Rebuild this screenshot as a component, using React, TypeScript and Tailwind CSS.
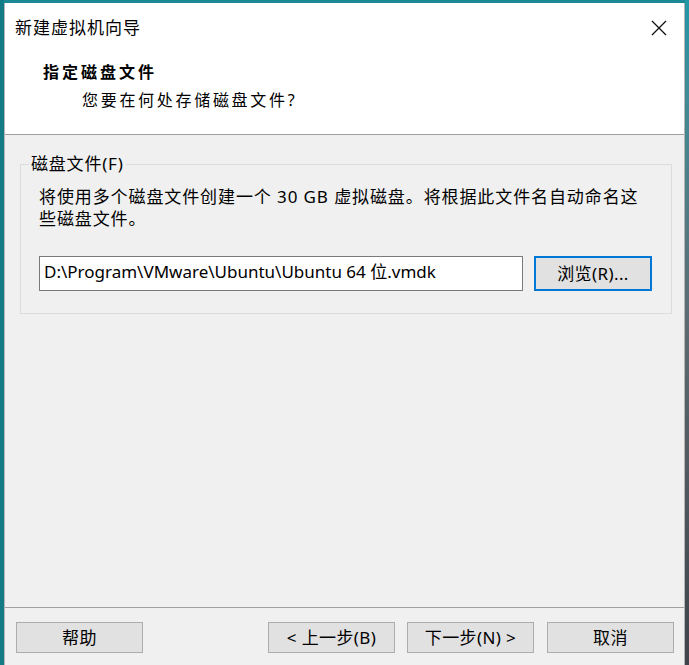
import React from "react";

const font = "font-['Noto_Sans','Noto_Sans_CJK_SC',sans-serif]";

function Btn({ label, className = "" }: { label: string; className?: string }) {
  return (
    <button
      className={`h-[31px] w-[127px] border border-[#adadad] bg-[#e1e1e1] text-[17px] leading-none tracking-[0.4px] text-black ${className}`}
    >
      {label}
    </button>
  );
}

export default function App() {
  return (
    <div className={`flex h-[665px] w-[689px] overflow-hidden bg-[#1a8995] ${font}`}>
      <div className="w-[4px] shrink-0 bg-[#137b86]" />
      <div className="mt-[3px] flex w-[681px] shrink-0 flex-col border-l border-r border-[#b5b5b5] bg-[#f0f0f0]">
        {/* header */}
        <div className="h-[132px] shrink-0 border-b border-[#a0a0a0] bg-white">
          <div className="flex h-[50px] items-center justify-between pl-[10px] pr-[14px]">
            <span className="text-[17px] tracking-[1px] text-black">新建虚拟机向导</span>
            <svg width="16" height="16" viewBox="0 0 16 16" className="mr-[3px]">
              <path d="M1 1 L15 15 M15 1 L1 15" stroke="#111" strokeWidth="1.3" fill="none" />
            </svg>
          </div>
          <div className="pt-[8px]">
            <div className="pl-[38px] text-[16px] font-bold leading-[22px] tracking-[3px] text-black">
              指定磁盘文件
            </div>
            <div className="mt-[6px] pl-[77px] text-[16px] leading-[22px] tracking-[2.7px] text-black">
              您要在何处存储磁盘文件?
            </div>
          </div>
        </div>
        {/* body */}
        <div className="flex-1 px-[15px] pt-[18px]">
          <fieldset className="border border-[#dcdcdc] pb-[22px]">
            <legend className="ml-[8px] px-[2px] text-[17px] leading-[22px] tracking-[0.8px] text-black">磁盘文件(F)</legend>
            <div className="pl-[18px] pr-[19px]">
              <p className="mt-[11px] whitespace-nowrap text-[17px] leading-[22px] tracking-[0.9px] text-black">
                将使用多个磁盘文件创建一个 30 GB 虚拟磁盘。将根据此文件名自动命名这
                <br />
                些磁盘文件。
              </p>
              <div className="mt-[26px] flex items-center gap-[11px]">
                <div className="flex h-[35px] w-[484px] items-center border border-[#7a7a7a] bg-white pl-[4px] pb-[3px] text-[17px] text-black">
                  D:\Program\VMware\Ubuntu\Ubuntu 64 位.vmdk
                </div>
                <button className="h-[35px] w-[118px] border-2 border-[#0078d7] bg-[#e1e1e1] text-[17px] leading-none tracking-[0.4px] text-black">
                  浏览(R)...
                </button>
              </div>
            </div>
          </fieldset>
        </div>
        {/* footer */}
        <div className="h-[58px] shrink-0 border-t border-[#a0a0a0]">
          <div className="flex pl-[11px] pt-[14px]">
            <Btn label="帮助" />
            <Btn label="< 上一步(B)" className="ml-[125px]" />
            <Btn label="下一步(N) >" className="ml-[12px]" />
            <Btn label="取消" className="ml-[13px]" />
          </div>
        </div>
      </div>
      <div className="flex-1 bg-gradient-to-b from-[#1f98a6] via-[#5d6a70] to-[#3e4449]" />
    </div>
  );
}
